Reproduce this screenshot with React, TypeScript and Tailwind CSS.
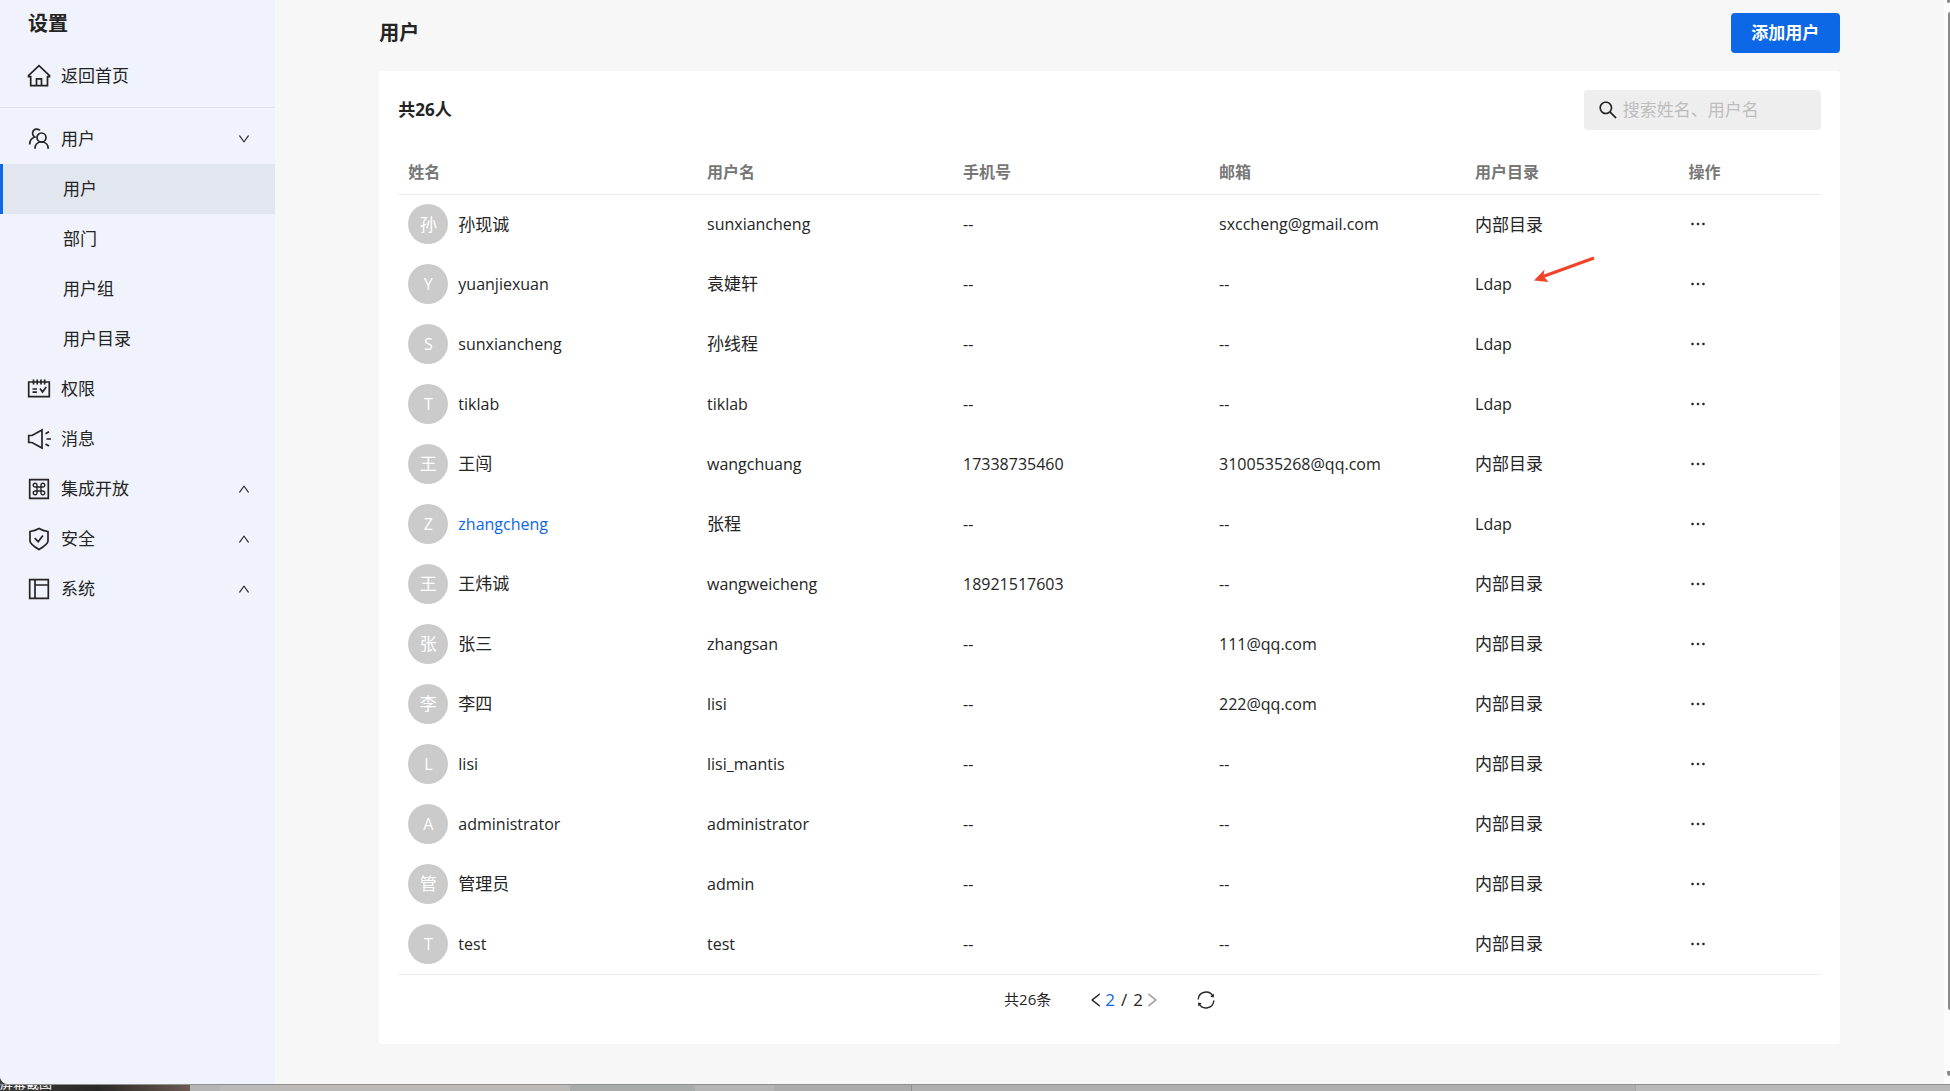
import React from 'react';
import {
  AiOutlineDown,
  AiOutlineEllipsis,
  AiOutlineLeft,
  AiOutlineRight,
  AiOutlineSearch,
  AiOutlineUp,
} from 'react-icons/ai';

interface IconProps {
  children: React.ReactNode;
}

const Icon = ({ children }: IconProps) => (
  <svg
    viewBox="0 0 24 24"
    className="h-6 w-6 shrink-0"
    fill="none"
    stroke="#242424"
    strokeWidth="1.7"
    aria-hidden="true"
  >
    {children}
  </svg>
);

const HomeIcon = () => (
  <Icon>
    <path d="M3.700 12v9.700h16.800V12" />
    <path d="M4 12.700H1.500v-1L12 1.700l10.500 10v1H20" />
    <path d="M9.500 21.500v-6.700h5v6.700" />
  </Icon>
);

const UsersIcon = () => (
  <Icon>
    <circle cx="14.500" cy="10.500" r="4.500" />
    <path d="M8 21.700c0-4 2.500-6.700 6.500-6.700s6.700 2.700 6.700 6.700" />
    <path d="M13 3.500C11.500 1.800 8.500 1.500 6.800 3.200 4.800 5.200 5.300 8.500 7.800 10 4.500 11 2.700 13.500 2.700 17.500" />
  </Icon>
);

const PermissionIcon = () => (
  <Icon>
    <path d="M1.700 5h20.600v14.700H1.700z" />
    <path d="M6.500 2.500v5M10.200 2.500v5M14 2.500v5M17.700 2.500v5M5.500 12H10M5.500 15.200H10M13 11.500l2.500 3.500 3.700-5" />
  </Icon>
);

const MessageIcon = () => (
  <Icon>
    <path d="M1.700 8.500H5l10-5.500v18L5 15.500H1.700z" />
    <path d="M18.500 6.700l3.500-2M19.500 12h4.500M18.500 17l3.500 2" />
  </Icon>
);

const OpenIcon = () => (
  <Icon>
    <path d="M2.700 2.700h18.600v18.600H2.700z" />
    <path
      d="M10 10h4v4h-4zM10 10H8.200A1.900 1.900 0 1 1 10 8.200zM14 10V8.200A1.900 1.900 0 1 1 15.800 10zM14 14h1.800A1.900 1.900 0 1 1 14 15.800zM10 14v1.800A1.900 1.900 0 1 1 8.200 14z"
      strokeWidth="1.400"
    />
  </Icon>
);

const SafeIcon = () => (
  <Icon>
    <path d="M12 1.500c2.500 1.500 5.500 2.500 9 3v9.500c0 3-4 5.500-9 8.500-5-3-9-5.500-9-8.500V4.500c3.500-.5 6.500-1.500 9-3z" />
    <path d="M7.700 11.200l3.500 3.500 4.700-6.200" />
  </Icon>
);

const SystemIcon = () => (
  <Icon>
    <path d="M2.700 2.700h18.600v18.600H2.700zM8 2.700v18.600M8 8h13.300" />
  </Icon>
);

const RefreshIcon = () => (
  <svg
    viewBox="0 0 18 18"
    className="h-[18px] w-[18px]"
    fill="none"
    stroke="#242424"
    strokeWidth="1.4"
    aria-hidden="true"
  >
    <path d="M1.200 8.500A7.800 7.800 0 0 1 16 5.500M16.800 9.500A7.800 7.800 0 0 1 2 12.500" />
    <path d="M16.800 2.500v4l-3.500-.8zM1.200 15.500v-4l3.500.8z" fill="#242424" stroke="none" />
  </svg>
);

interface MenuItem {
  label: string;
  icon: React.ReactNode;
  open?: boolean;
  children?: string[];
}

const menu: MenuItem[] = [
  {
    label: '用户',
    icon: <UsersIcon />,
    open: true,
    children: ['用户', '部门', '用户组', '用户目录'],
  },
  { label: '权限', icon: <PermissionIcon /> },
  { label: '消息', icon: <MessageIcon /> },
  { label: '集成开放', icon: <OpenIcon />, open: false },
  { label: '安全', icon: <SafeIcon />, open: false },
  { label: '系统', icon: <SystemIcon />, open: false },
];

const Sidebar = () => {
  return (
    <aside className="w-[275px] shrink-0 bg-[#f0f3fb] text-[17px]">
      <h2 className="px-7 pt-2 pb-3 text-[20px] leading-8 font-bold">设置</h2>
      <a href="#home" className="flex h-12 items-center gap-2.5 px-[27px]">
        <HomeIcon />
        返回首页
      </a>
      <hr className="mt-[7px] mb-1.5 border-[#dfe2e8]" />
      <ul>
        {menu.map((item) => (
          <li key={item.label}>
            <button
              type="button"
              className="flex h-[50px] w-full items-center gap-2.5 pr-6 pl-[27px]"
            >
              {item.icon}
              {item.label}
              {item.open === true && (
                <AiOutlineDown className="ml-auto h-3.5 w-3.5" />
              )}
              {item.open === false && (
                <AiOutlineUp className="ml-auto h-3.5 w-3.5" />
              )}
            </button>
            {item.children && (
              <ul>
                {item.children.map((child, index) => (
                  <li key={child}>
                    <a
                      href="#menu"
                      className={`flex h-[50px] items-center border-l-3 pl-[60px] ${
                        index === 0
                          ? 'border-[#0d68e8] bg-[#e2e6ef]'
                          : 'border-transparent'
                      }`}
                    >
                      {child}
                    </a>
                  </li>
                ))}
              </ul>
            )}
          </li>
        ))}
      </ul>
    </aside>
  );
};

interface User {
  name: string;
  account: string;
  phone?: string;
  email?: string;
  ldap?: boolean;
}

const users: User[] = [
  { name: '孙现诚', account: 'sunxiancheng', email: 'sxccheng@gmail.com' },
  { name: 'yuanjiexuan', account: '袁婕轩', ldap: true },
  { name: 'sunxiancheng', account: '孙线程', ldap: true },
  { name: 'tiklab', account: 'tiklab', ldap: true },
  {
    name: '王闯',
    account: 'wangchuang',
    phone: '17338735460',
    email: '3100535268@qq.com',
  },
  { name: 'zhangcheng', account: '张程', ldap: true },
  { name: '王炜诚', account: 'wangweicheng', phone: '18921517603' },
  { name: '张三', account: 'zhangsan', email: '111@qq.com' },
  { name: '李四', account: 'lisi', email: '222@qq.com' },
  { name: 'lisi', account: 'lisi_mantis' },
  { name: 'administrator', account: 'administrator' },
  { name: '管理员', account: 'admin' },
  { name: 'test', account: 'test' },
];

const columns = [
  { title: '姓名', width: 'w-[21%]' },
  { title: '用户名', width: 'w-[18%]' },
  { title: '手机号', width: 'w-[18%]' },
  { title: '邮箱', width: 'w-[18%]' },
  { title: '用户目录', width: 'w-[15%]' },
  { title: '操作', width: 'w-[10%]' },
];

const Text = ({ value }: { value: string }) => (
  <span className={/^[\x20-\x7e]+$/.test(value) ? 'text-[16px]' : 'text-[17px]'}>
    {value}
  </span>
);

const Arrow = () => (
  <svg
    viewBox="0 0 62 28"
    className="absolute -top-4 left-[59px] h-7 w-[62px]"
    aria-hidden="true"
  >
    <path d="M60 2L9 20.500" stroke="#f0432a" strokeWidth="3" />
    <path d="M0 24.500L10.500 13.500l-1 6.500 5 6z" fill="#f0432a" />
  </svg>
);

const UserTable = () => {
  return (
    <table className="mt-5 w-full table-fixed border-b border-[#ececec] text-left">
      <thead>
        <tr className="h-11 border-b border-[#ececec] text-[16px] text-[#777]">
          {columns.map((column) => (
            <th key={column.title} className={`${column.width} px-2.5 font-bold`}>
              {column.title}
            </th>
          ))}
        </tr>
      </thead>
      <tbody>
        {users.map((user, index) => (
          <tr key={index} className="h-[60px]">
            <td className="px-2.5">
              <div
                className={`flex items-center gap-2.5 ${
                  user.name === 'zhangcheng' ? 'text-[#0d68e8]' : ''
                }`}
              >
                <span className="flex h-10 w-10 items-center justify-center rounded-full bg-[#cbcbcb] text-white">
                  <Text value={user.name[0].toUpperCase()} />
                </span>
                <Text value={user.name} />
              </div>
            </td>
            <td className="px-2.5">
              <Text value={user.account} />
            </td>
            <td className="px-2.5">
              <Text value={user.phone ?? '--'} />
            </td>
            <td className="px-2.5">
              <Text value={user.email ?? '--'} />
            </td>
            <td className="px-2.5">
              <div className="relative">
                <Text value={user.ldap ? 'Ldap' : '内部目录'} />
                {index === 1 && <Arrow />}
              </div>
            </td>
            <td className="px-2.5">
              <button type="button" aria-label="操作" className="block">
                <AiOutlineEllipsis className="h-5 w-5 stroke-black stroke-20" />
              </button>
            </td>
          </tr>
        ))}
      </tbody>
    </table>
  );
};

const Pagination = () => {
  return (
    <div className="flex h-[69px] items-start justify-center pt-[11px]">
      <div className="flex h-7 items-center">
        <span className="mr-9 text-[15px]">共26条</span>
        <button type="button" aria-label="上一页">
          <AiOutlineLeft className="h-[18px] w-[18px]" />
        </button>
        <span className="flex gap-1.5 text-[17px]">
          <span className="text-[#0d68e8]">2</span>
          <span>/</span>
          <span>2</span>
        </span>
        <button type="button" aria-label="下一页" className="mr-9 text-[#999]">
          <AiOutlineRight className="h-[18px] w-[18px]" />
        </button>
        <button type="button" aria-label="刷新">
          <RefreshIcon />
        </button>
      </div>
    </div>
  );
};

const ScrollBar = () => {
  return (
    <div className="flex w-1.5 flex-col items-end bg-[#fcfcfc] pb-2">
      <div className="h-[3px] w-[3px] rounded-b bg-[#8b8b8b]"></div>
      <div className="mt-[9px] mb-[61px] w-0.5 flex-1 rounded-l bg-[#8b8b8b]"></div>
      <div className="h-[5px] w-[3px] rounded-bl bg-[#8b8b8b]"></div>
    </div>
  );
};

const Taskbar = () => {
  return (
    <div className="flex h-[7px] overflow-hidden border-t border-[#8f8f8f] bg-[#b0b0b0]">
      <div className="flex w-[190px] items-end bg-linear-to-r from-[#3c3c3a] via-[#292825] to-[#6b5a52] text-[13px] leading-4 whitespace-nowrap text-white">
        屏幕截图
      </div>
      <div className="w-[30px] bg-[#b5b5b5]"></div>
      <div className="w-[350px] bg-[#bbbab9]"></div>
      <div className="w-[125px] bg-[#aaacab]"></div>
      <div className="w-[79px] bg-[#b5b5b5]"></div>
      <div className="w-[138px] border-r border-[#8f8f8f] bg-[#acacac]"></div>
      <div className="flex-1 bg-[#afafaf]"></div>
      <div className="w-[315px] border-l border-[#a5a5a5] bg-[#b9b9ba]"></div>
    </div>
  );
};

const App = () => {
  return (
    <div className="flex min-h-screen flex-col bg-[#3c3c3a] font-['Open_Sans','Noto_Sans_CJK_SC',sans-serif] text-[#242424]">
      <div className="flex flex-1 overflow-hidden rounded-bl-lg bg-[#f7f7f7]">
        <Sidebar />
        <main className="flex-1 pb-10">
          <div className="mx-auto w-7/8">
            <header className="flex h-[71px] items-start justify-between pt-[13px]">
              <h1 className="text-[20px] leading-10 font-bold">用户</h1>
              <button
                type="button"
                className="h-10 w-[109px] rounded bg-[#0d68e8] text-[17px] font-bold text-white"
              >
                添加用户
              </button>
            </header>
            <section className="rounded bg-white px-[19px] pt-[19px]">
              <div className="flex h-10 items-center justify-between">
                <h2 className="text-[17px] font-bold">共26人</h2>
                <label className="flex h-10 w-[237px] items-center gap-1 rounded bg-[#eee] px-[13px]">
                  <AiOutlineSearch className="h-[22px] w-[22px] shrink-0" />
                  <input
                    type="text"
                    aria-label="搜索姓名、用户名"
                    placeholder="搜索姓名、用户名"
                    className="w-full bg-transparent text-[17px] outline-none placeholder:text-[#bdbdbd]"
                  />
                </label>
              </div>
              <UserTable />
              <Pagination />
            </section>
          </div>
        </main>
        <ScrollBar />
      </div>
      <Taskbar />
    </div>
  );
};

export default App;
